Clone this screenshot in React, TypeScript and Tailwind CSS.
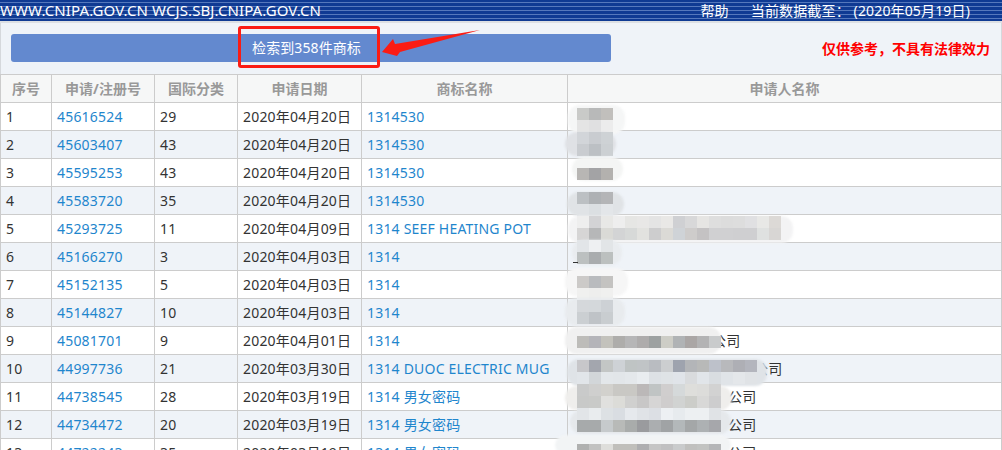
const rows: [string, string, string, string, string, string?][] = [
  ["1", "45616524", "29", "2020年04月20日", "1314530"],
  ["2", "45603407", "43", "2020年04月20日", "1314530"],
  ["3", "45595253", "43", "2020年04月20日", "1314530"],
  ["4", "45583720", "35", "2020年04月20日", "1314530"],
  ["5", "45293725", "11", "2020年04月09日", "1314 SEEF HEATING POT"],
  ["6", "45166270", "3", "2020年04月03日", "1314"],
  ["7", "45152135", "5", "2020年04月03日", "1314"],
  ["8", "45144827", "10", "2020年04月03日", "1314"],
  ["9", "45081701", "9", "2020年04月01日", "1314", "公司"],
  ["10", "44997736", "21", "2020年03月30日", "1314 DUOC ELECTRIC MUG", "公司"],
  ["11", "44738545", "28", "2020年03月19日", "1314 男女密码", "公司"],
  ["12", "44734472", "20", "2020年03月19日", "1314 男女密码", "公司"],
  ["13", "44722243", "35", "2020年03月19日", "1314 男女密码", "公司"],
];

const pads = ["pl-[146px]", "pl-[146px]", "pl-[146px]", "pl-[146px]", "pl-[146px]", "pl-[146px]", "pl-[146px]", "pl-[146px]", "pl-[144px]", "pl-[186px]", "pl-[160px]", "pl-[160px]", "pl-[160px]"];

type M = { x: number; y: number; w: number; h: number; blob: string; y0: number; cells: string[][] };

const mosaics: M[] = [
  { x: 568, y: 105, w: 57, h: 29, blob: "#f5f6f6", y0: 108, cells: [["c9cac8", "b8b9b9", "c1bfbc"], ["e4e4e4", "e0e0e1", "ececec"]] },
  { x: 565, y: 132, w: 51, h: 24, blob: "#dfe1e5", y0: 132, cells: [["d2d5d9", "c9ccd0", "ced2d5"], ["c9ccd0", "bcc0c4", "ccd0d3"]] },
  { x: 572, y: 157, w: 51, h: 24, blob: "#f4f5f4", y0: 168, cells: [["b8b6b4", "a3a3a5", "b3b1ae"]] },
  { x: 567, y: 192, w: 57, h: 24, blob: "#e0e3e6", y0: 192, cells: [["bcc0c3", "aeb1b4", "b4b5b7"], ["e0e3e6", "dbdfe2", "e3e6e9"]] },
  {
    x: 568, y: 216, w: 225, h: 27, blob: "#f3f3f4", y0: 216,
    cells: [
      ["eeeeee", "d3d3d5", "e8e8e6", "eeeeee", "e6e6e4", "e8e7e6", "e4e4e4", "e9e8e6", "cfd0d3", "d8d8d9", "e6e5e3", "dedede", "dcdcdc", "dddddd", "e0e0e2", "e8e8e6", "dcd9d6"],
      ["d6d5d5", "b6b7b8", "dadad6", "d3d4d5", "d7d9d8", "e2e2df", "cdcdce", "dbdad6", "cfd3d7", "cecccb", "c4c2c3", "d0d0d2", "d0d0d2", "cfcfd1", "cfcfd1", "dfe1e0", "d8d6d4"],
    ],
  },
  { x: 572, y: 240, w: 50, h: 25, blob: "#e9ecef", y0: 240, cells: [["e2e5e8", "eef0f2", "e2e5e7"], ["bcc0c0", "a9acae", "bcc0bf"]] },
  { x: 565, y: 268, w: 63, h: 28, blob: "#f6f6f6", y0: 276, cells: [["cccac8", "b9bbbe", "c4c3c1"], ["f0f0ef", "eeeeed", "f0f0ef"]] },
  { x: 565, y: 298, w: 60, h: 28, blob: "#e8ebee", y0: 300, cells: [["d5d8db", "d4d8db", "cdd1d5"], ["cbcfd2", "bfc3c7", "c9cdd0"]] },
  {
    x: 565, y: 327, w: 156, h: 27, blob: "#f0f0f0", y0: 336,
    cells: [["bdbcb9", "b4b4b9", "c3c2bc", "aeadab", "b6b6b7", "aeacac", "9da1a1", "cdcdc6", "b0b3b5", "aaa6a5", "b3b3b4", "c9cbcc"]],
  },
  {
    x: 567, y: 359, w: 200, h: 27, blob: "#dfe3e7", y0: 360,
    cells: [
      ["c7c7ca", "a3a6ae", "c3c6c5", "ced2d6", "bfc4c4", "c0c4c6", "b9bcc1", "ccced0", "9ea3ae", "b3b5b8", "b8b9b8", "bdc1ca", "b8b9bc", "aeafb5", "b3b5bd"],
      ["e1e5e9", "d2d6d9", "e3e7ea", "e2e6e9", "e4e8eb", "e9edf0", "dde1e5", "dfe3e6", "e0e4e9", "d9dbdd", "e1e5e9", "d9dde1", "e0e4e8", "e4e7ea", "e0e3e6"],
    ],
  },
  {
    x: 565, y: 386, w: 167, h: 24, blob: "#efeeec", y0: 384,
    cells: [
      ["c9caca", "cfcfce", "d2d1cd", "c9c8c4", "c9c8c4", "bbb8b8", "c0c4c4", "d0cece", "d5d9da", "dededb", "dcdcda", "d2d2d2"],
      ["c8c9c8", "c9cac8", "e0e0de", "dcdcd8", "d0d0cf", "c8c7c7", "d6d5d5", "cfcdcd", "d1d3d2", "cccdc9", "d8d8d7", "cdcdce"],
    ],
  },
  {
    x: 570, y: 410, w: 161, h: 24, blob: "#e5e8eb", y0: 408,
    cells: [
      ["e2e5e8", "e9ecee", "dde1e4", "d9dde2", "e6e9ed", "e0e3e7", "dcdfe4", "edf0f3", "e7ebee", "edf0f2", "edf0f2", "e0e3e6"],
      ["a7aaab", "a7aaab", "c6cacc", "b8bab8", "a9acab", "9a9b9e", "abaeb0", "a0a3a5", "b3b8ba", "a4a7a8", "adb1b3", "a6a7ab"],
    ],
  },
  {
    x: 555, y: 435, w: 176, h: 20, blob: "#f2f4f5", y0: 444,
    cells: [["b0b1b0", "c2c2c1", "dededb", "c0bfbb", "c0bfbb", "aeaeb0", "c5c5c5", "c0c0c1", "c9cbcc", "c0c0be", "c2c3c1", "b5b6b8"]],
  },
];

function Mosaic({ m }: { m: M }) {
  return (
    <>
      <div
        className="absolute rounded-[12px] blur-[1px]"
        style={{ left: m.x, top: m.y, width: m.w, height: m.h, background: m.blob }}
      />
      <div className="absolute flex flex-col" style={{ left: 577, top: m.y0 }}>
        {m.cells.map((row, i) => (
          <div key={i} className="flex">
            {row.map((c, j) => (
              <div key={j} className="h-[12px] w-[12px]" style={{ background: "#" + c }} />
            ))}
          </div>
        ))}
      </div>
    </>
  );
}

const th = "border border-[#cccccc] bg-[#f6f7f7] text-center font-bold text-[#999999] text-[14px] h-[28px] p-0";
const td = "border border-[#cccccc] px-[5px] py-0 h-[28px] text-[14px] tracking-[0.2px] whitespace-nowrap overflow-hidden";

export default function App() {
  return (
    <div
      className="relative h-[450px] w-[1002px] overflow-hidden bg-white text-[#333333]"
      style={{ fontFamily: '"Noto Sans", "Noto Sans CJK SC", sans-serif' }}
    >
      <header className="flex h-[21px] items-center justify-between bg-[#0f3a93] bg-[repeating-linear-gradient(180deg,#0f3a93_0px,#0f3a93_2px,#5578bc_2px,#5578bc_3px,#0f3a93_3px,#0f3a93_4px)] pr-[32px] text-[14px] leading-[21px] text-white">
        <span className="text-[15px] tracking-[0.1px]">WWW.CNIPA.GOV.CN WCJS.SBJ.CNIPA.GOV.CN</span>
        <span className="flex gap-[22px] tracking-[0.15px]">
          <span>帮助</span>
          <span className="whitespace-pre">当前数据截至： (2020年05月19日)</span>
        </span>
      </header>
      <div className="h-[2px] bg-[#dcdfe3]" />

      <section className="flex h-[51px] items-center border-x border-[#d5d8dc] bg-[#eff3f8] pl-[10px] pr-[11px]">
        <div className="-mt-[2px] flex h-[28px] w-[600px] items-center justify-center rounded-[3px] bg-[#6389cf] pr-[9px] text-[14px] tracking-[0.1px] text-white">
          检索到358件商标
        </div>
        <div className="ml-auto text-[14px] font-bold text-[#ff0000]">仅供参考，不具有法律效力</div>
      </section>

      <table className="w-[1002px] table-fixed border-collapse">
        <colgroup>
          <col className="w-[51px]" />
          <col className="w-[103px]" />
          <col className="w-[83px]" />
          <col className="w-[124px]" />
          <col className="w-[206px]" />
          <col />
        </colgroup>
        <thead>
          <tr>
            {["序号", "申请/注册号", "国际分类", "申请日期", "商标名称", "申请人名称"].map((h) => (
              <th key={h} className={th}>
                {h}
              </th>
            ))}
          </tr>
        </thead>
        <tbody>
          {rows.map((r, i) => (
            <tr key={r[0]} className={i % 2 === 1 ? "bg-[#eff3f8]" : "bg-white"}>
              <td className={td}>{r[0]}</td>
              <td className={td + " text-[#1f86cd]"}>{r[1]}</td>
              <td className={td}>{r[2]}</td>
              <td className={td}>{r[3]}</td>
              <td className={td + " text-[#1f86cd]"}>{r[4]}</td>
              <td className={td + " " + pads[i]}>{r[5] ?? ""}</td>
            </tr>
          ))}
        </tbody>
      </table>

      {mosaics.map((m, i) => (
        <Mosaic key={i} m={m} />
      ))}
      <div className="absolute left-[573px] top-[262px] h-[1px] w-[5px] bg-[#333333]" />

      <div className="absolute left-[238px] top-[26px] h-[42px] w-[142px] rounded-[3px] border-[3px] border-[#fb1c14]" />
      <svg className="absolute left-[375px] top-[25px]" width="110" height="36" viewBox="375 25 110 36">
        <polygon points="382,52 393,39 395,44 480,30 400,52 397,56" fill="#fb1c14" />
      </svg>
    </div>
  );
}
